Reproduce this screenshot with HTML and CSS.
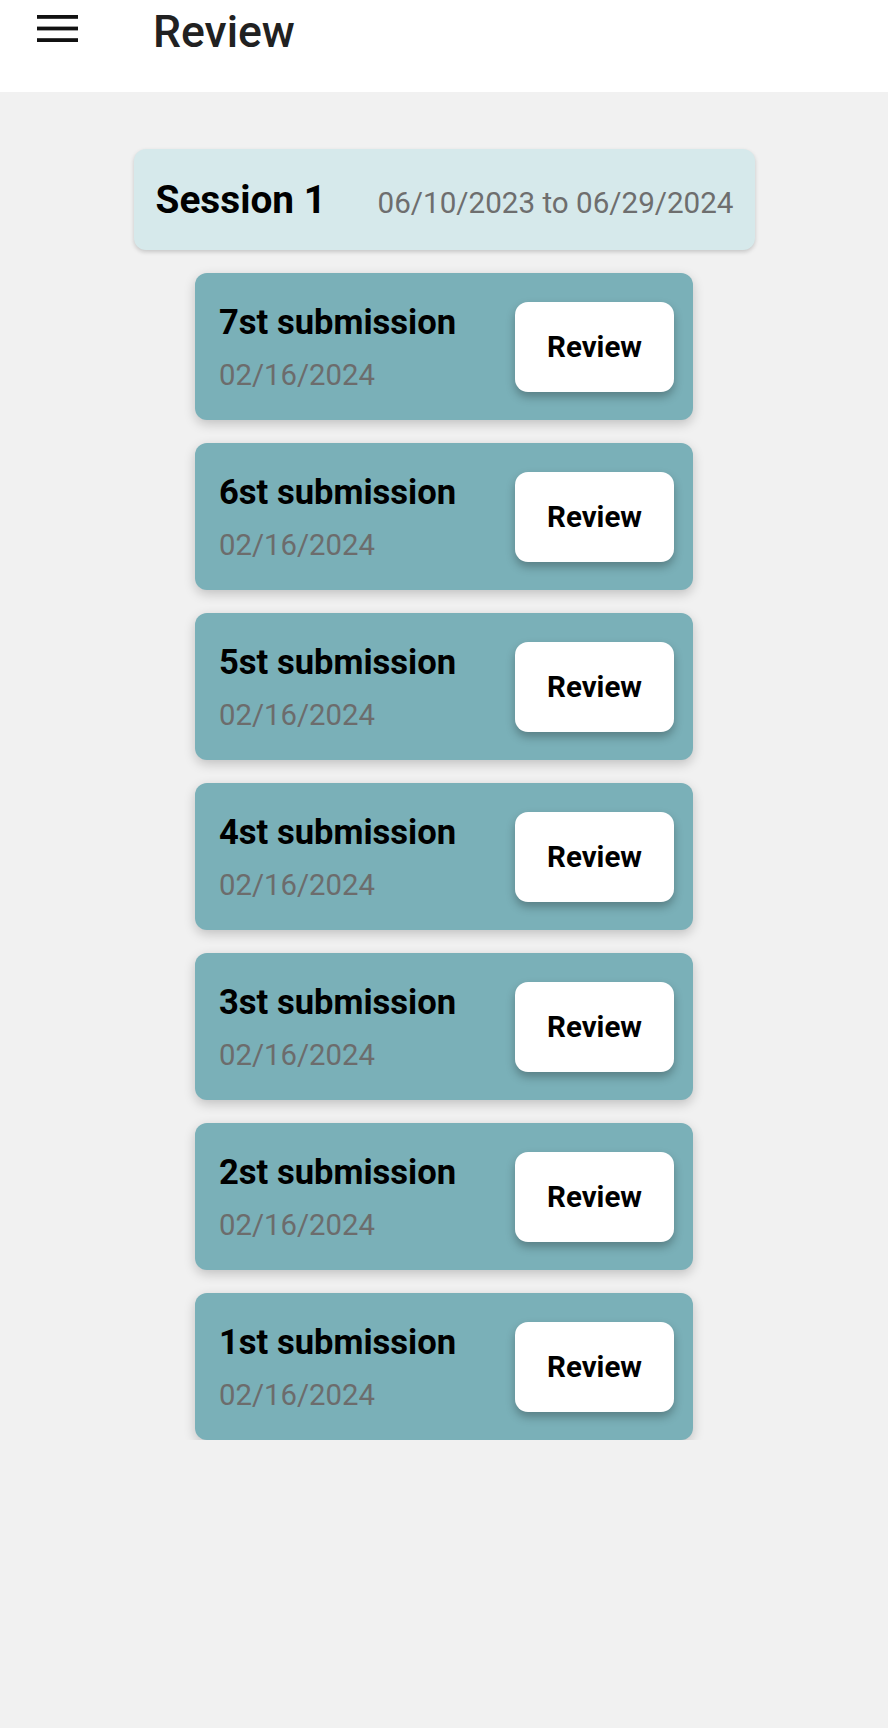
FILE: index.html
```html
<!DOCTYPE html>
<html lang="en">
<head>
<meta charset="utf-8">
<title>Review</title>
<link rel="stylesheet" href="styles.css">
</head>
<body>
<header class="topbar">
  <svg class="menu-icon" width="41" height="27" viewBox="0 0 41 27" aria-hidden="true">
    <rect x="0" y="0" width="41" height="3.8" fill="#111"/>
    <rect x="0" y="11.6" width="41" height="3.8" fill="#111"/>
    <rect x="0" y="23.2" width="41" height="3.8" fill="#111"/>
  </svg>
  <h1 class="title">Review</h1>
</header>
<main class="content">
  <section class="session">
    <div class="session-card">
      <span class="session-name">Session 1</span>
      <span class="session-dates">06/10/2023 to 06/29/2024</span>
    </div>
    <div class="submissions">
      <div class="sub-card">
        <div class="sub-info"><div class="sub-name">7st submission</div><div class="sub-date">02/16/2024</div></div>
        <button class="review-btn">Review</button>
      </div>
      <div class="sub-card">
        <div class="sub-info"><div class="sub-name">6st submission</div><div class="sub-date">02/16/2024</div></div>
        <button class="review-btn">Review</button>
      </div>
      <div class="sub-card">
        <div class="sub-info"><div class="sub-name">5st submission</div><div class="sub-date">02/16/2024</div></div>
        <button class="review-btn">Review</button>
      </div>
      <div class="sub-card">
        <div class="sub-info"><div class="sub-name">4st submission</div><div class="sub-date">02/16/2024</div></div>
        <button class="review-btn">Review</button>
      </div>
      <div class="sub-card">
        <div class="sub-info"><div class="sub-name">3st submission</div><div class="sub-date">02/16/2024</div></div>
        <button class="review-btn">Review</button>
      </div>
      <div class="sub-card">
        <div class="sub-info"><div class="sub-name">2st submission</div><div class="sub-date">02/16/2024</div></div>
        <button class="review-btn">Review</button>
      </div>
      <div class="sub-card">
        <div class="sub-info"><div class="sub-name">1st submission</div><div class="sub-date">02/16/2024</div></div>
        <button class="review-btn">Review</button>
      </div>
    </div>
  </section>
</main>
</body>
</html>
```

FILE: styles.css
```css
* { box-sizing: border-box; }

html, body {
  margin: 0;
  padding: 0;
}

body {
  background: #f1f1f1;
  font-family: Roboto, "Liberation Sans", sans-serif;
  width: 888px;
  min-height: 1728px;
}

.topbar {
  height: 92px;
  background: #ffffff;
  display: flex;
  align-items: flex-start;
  padding-left: 37px;
}

.menu-icon {
  display: block;
  margin-top: 15px;
  flex: none;
}

.title {
  margin: 7px 0 0 75px;
  font-size: 44.5px;
  line-height: 50px;
  font-weight: 500;
  color: #212121;
}

.content {
  display: flex;
  justify-content: center;
  padding-top: 57px;
}

.session {
  width: 621px;
  display: flex;
  flex-direction: column;
}

.session-card {
  height: 101px;
  background: #d6e9eb;
  border-radius: 12px;
  box-shadow: 0 2px 4px rgba(0, 0, 0, 0.18);
  display: flex;
  align-items: baseline;
  justify-content: space-between;
  padding: 28px 21px 0 22px;
  position: relative;
  z-index: 1;
}

.session-name {
  font-size: 38.8px;
  line-height: 45px;
  font-weight: 700;
  color: #000;
}

.session-dates {
  font-size: 29.6px;
  color: #6e6e6e;
}

.submissions {
  height: 1190px;
  overflow: hidden;
  display: flex;
  flex-direction: column;
  align-items: center;
  gap: 23px;
  padding-top: 23px;
}

.sub-card {
  flex: none;
  width: 498px;
  background: #7ab0b8;
  border-radius: 12px;
  box-shadow: 0 4px 12px rgba(0, 0, 0, 0.2);
  display: flex;
  align-items: center;
  justify-content: space-between;
  padding: 28.5px 19px 28.5px 24px;
}

.sub-name {
  font-size: 34.6px;
  line-height: 41px;
  font-weight: 700;
  color: #000;
}

.sub-date {
  margin-top: 15px;
  font-size: 29.3px;
  line-height: 34px;
  color: #6c6c6c;
}

.review-btn {
  width: 159px;
  height: 90px;
  border: none;
  border-radius: 13px;
  background: #ffffff;
  box-shadow: 0 5px 10px rgba(0, 0, 0, 0.28);
  font-family: Roboto, "Liberation Sans", sans-serif;
  font-size: 29.5px;
  font-weight: 700;
  color: #000;
  padding: 0;
}
```
